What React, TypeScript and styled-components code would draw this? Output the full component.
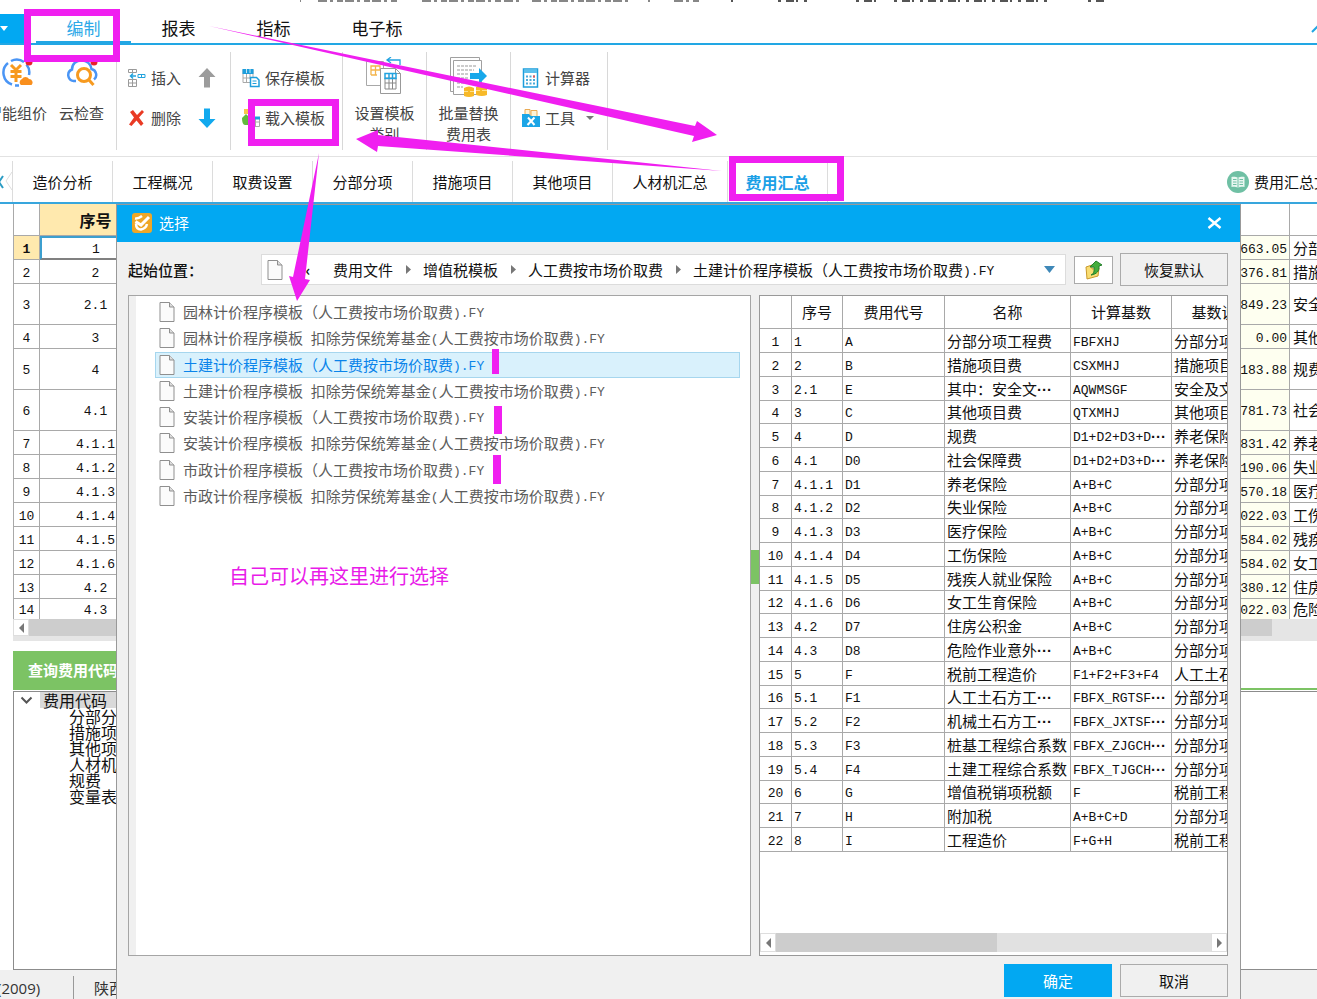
import React from "react";
import styled, { createGlobalStyle, css } from "styled-components";

const BLUE = "#02a8f2";
const MARK = "#f01ff0";
const GRID = "#a9a9a9";
const CJK = `"Noto Sans CJK SC", "Liberation Sans", sans-serif`;

const GlobalStyle = createGlobalStyle`
  *, *::before, *::after { box-sizing: border-box; }
  body { margin: 0; background: #fff; color: #111; font: 15px/20px ${CJK}; }
  button { font: inherit; color: inherit; background: none; border: 0; padding: 0; margin: 0; white-space: nowrap; cursor: pointer; }
  a { color: inherit; text-decoration: none; }
  ul { list-style: none; margin: 0; padding: 0; }
  svg { display: block; flex: none; }
`;

/* ---------- text with half-width latin ---------- */

const Latin = styled.span`
  font-family: "Liberation Mono", monospace;
  font-size: 13px;
  line-height: 1;
  vertical-align: 1px;
  white-space: pre;
`;

const Dots = styled.span`
  font-family: "Liberation Sans", sans-serif;
  font-weight: 700;
  line-height: 1;
`;

function Mixed({ text }: { text: string }) {
  return (
    <>
      {text
        .split(/([\x20-\x7e]+|·+)/)
        .filter(Boolean)
        .map((part, i) =>
          part[0] === "·" ? <Dots key={i}>{part}</Dots> : /^[\x20-\x7e]/.test(part) ? <Latin key={i}>{part}</Latin> : part
        )}
    </>
  );
}

/* ---------- application frame ---------- */

const Window = styled.div`
  position: relative;
  display: flex;
  flex-direction: column;
  height: 100vh;
  min-height: 900px;
  overflow: hidden;
`;

const TitleStrip = styled.div`
  height: 14px;
  flex: none;
  padding-left: 296px;
`;

const MenuBar = styled.nav`
  display: flex;
  flex: none;
  height: 31px;
  border-bottom: 2px solid #22a7e4;
`;

const FileMenu = styled.button`
  width: 24px;
  margin-right: 12px;
  background: ${BLUE};
`;

const MenuTab = styled.button<{ $active?: boolean; $wide?: boolean }>`
  width: ${(p) => (p.$wide ? 112 : 95)}px;
  font-size: 17px;
  line-height: 26px;
  border-bottom: 2px solid ${(p) => (p.$active ? "#22a7e4" : "transparent")};
  color: ${(p) => (p.$active ? "#2ea9e8" : "#111")};
`;

const Collapse = styled.button`
  margin-left: auto;
  width: 6px;
  overflow: hidden;
`;

const Ribbon = styled.div`
  display: flex;
  flex: none;
  height: 112px;
  padding: 7px 0 6px;
  border-bottom: 1px solid #e2e2e2;
  color: #444;
`;

const RibbonGroup = styled.div<{ $width: number }>`
  display: flex;
  flex: none;
  justify-content: center;
  width: ${(p) => p.$width}px;
  border-right: 1px solid #d8d8d8;
`;

const FirstGroup = styled(RibbonGroup)`
  justify-content: flex-start;
  overflow: hidden;
  gap: 12px;
  & > :first-child {
    margin-left: -13px;
  }
`;

const BigTool = styled.button`
  display: flex;
  flex-direction: column;
  align-items: center;
  height: 96px;
  padding-top: 5px;
  line-height: 21px;
`;

const BigToolIcon = styled.span`
  height: 45px;
`;

const BigToolLabel = styled.span`
  white-space: pre-line;
`;

const ToolRows = styled(RibbonGroup)`
  flex-direction: column;
  justify-content: flex-start;
  padding: 6px 0 0 11px;
`;

const ToolRow = styled.div<{ $gap?: number }>`
  display: flex;
  align-items: center;
  height: 40px;
  gap: ${(p) => p.$gap ?? 17}px;
`;

const SmallTool = styled.button`
  display: flex;
  align-items: center;
  gap: 5px;
`;

const TabBar = styled.nav`
  display: flex;
  flex: none;
  height: 47px;
  padding-top: 4px;
  border-bottom: 2px solid #38a6dd;
`;

const Scroller = styled.button`
  width: 13px;
  border-right: 1px solid #dcdcdc;
`;

const PageTab = styled.button<{ $active?: boolean; $wide?: boolean }>`
  width: ${(p) => (p.$wide ? 115 : 100)}px;
  border-right: 1px solid #dcdcdc;
  ${(p) =>
    p.$active &&
    css`
      color: #1ba0e6;
      font-size: 16px;
      font-weight: 700;
    `}
`;

const FileLink = styled.button`
  display: flex;
  align-items: center;
  gap: 5px;
  width: 90px;
  margin-left: auto;
  overflow: hidden;
`;

const Work = styled.main`
  flex: 1;
  min-height: 0;
  display: flex;
  flex-direction: column;
  margin-left: 13px;
`;

/* ---------- cost table behind the dialog ---------- */

const CostTable = styled.table`
  width: 100%;
  table-layout: fixed;
  border-collapse: separate;
  border-spacing: 0;
  border-left: 1px solid ${GRID};
  flex: none;
  th, td {
    padding: 0;
    height: 24px;
    font-weight: 400;
    line-height: 18px;
    white-space: nowrap;
    overflow: hidden;
    border-right: 1px solid ${GRID};
    border-bottom: 1px solid ${GRID};
    text-align: center;
  }
  th:last-child, td:last-child { border-right: 0; }
  thead th { height: 32px; }
  thead th:nth-child(2) {
    background: #ffe9ae;
    font-weight: 700;
    font-size: 16px;
  }
  td:nth-child(4) {
    background: #fefff0;
    text-align: right;
    padding-right: 2px;
  }
  td:nth-child(5) {
    text-align: left;
    padding-left: 3px;
  }
`;

const CostRow = styled.tr<{ $tall?: boolean; $last?: boolean; $current?: boolean }>`
  && > * {
    height: ${(p) => (p.$tall ? 41 : p.$last ? 20 : 24)}px;
    ${(p) => p.$last && "border-bottom: 0;"}
  }
  ${(p) =>
    p.$current &&
    css`
      && > th { background: #ffe9ae; font-weight: 700; }
      && > td:nth-child(2) { border: 2px solid #3c9fcf; border-bottom-color: #808080; }
    `}
`;

const CostScroll = styled.div`
  display: flex;
  flex: none;
  height: 22px;
  padding-bottom: 5px;
  background: #e5e5e5;
`;

const ScrollButton = styled.button`
  display: flex;
  align-items: center;
  justify-content: center;
  width: 16px;
  background: #fff;
  border: 1px solid #dedede;
`;

const CostThumb = styled.div`
  flex: 1;
  margin-right: 45px;
  background: #cdcdcd;
`;

const LookupBar = styled.div`
  flex: none;
  height: 39px;
  margin: 10px 0 1px;
  border-bottom: 2px solid #7cc364;
`;

const LookupTab = styled.button`
  height: 38px;
  width: 160px;
  padding-left: 15px;
  text-align: left;
  font-weight: 700;
  color: #fff;
  background: #7cc364;
`;

const Tree = styled.div`
  flex: 1;
  min-height: 0;
  border: 1px solid #8c8c8c;
  border-right: 0;
  font-size: 16px;
  line-height: 16px;
`;

const TreeRoot = styled.div`
  display: flex;
  align-items: center;
  height: 16px;
  padding-left: 6px;
  gap: 7px;
  span {
    width: 120px;
    padding-left: 3px;
    background: #d9d9d9;
  }
`;

const TreeLeaves = styled.ul`
  padding-left: 55px;
`;

const StatusBar = styled.footer`
  display: flex;
  flex: none;
  height: 29px;
  padding-top: 6px;
  background: #f0f0f0;
  color: #333;
  line-height: 24px;
  overflow: hidden;
`;

const StatusCell = styled.span<{ $first?: boolean }>`
  width: ${(p) => (p.$first ? 74 : 120)}px;
  padding-left: ${(p) => (p.$first ? 0 : 20)}px;
  font-family: ${(p) => (p.$first ? `"Open Sans", sans-serif` : "inherit")};
  border-right: 1px solid #999;
  text-indent: ${(p) => (p.$first ? -3 : 0)}px;
`;

/* ---------- dialog ---------- */

const Dialog = styled.section`
  position: absolute;
  top: 204px;
  bottom: 0;
  left: 116px;
  right: 76px;
  display: flex;
  flex-direction: column;
  background: #f0f0f0;
  border: 1px solid #999;
  border-bottom: 0;
`;

const DialogTitle = styled.header`
  display: flex;
  flex: none;
  align-items: center;
  gap: 7px;
  height: 37px;
  padding: 0 18px 2px 15px;
  color: #fff;
  background: ${BLUE};
  button { margin-left: auto; }
`;

const DialogBody = styled.div`
  display: flex;
  flex: 1;
  flex-direction: column;
  min-height: 0;
  padding: 11px 12px 2px 11px;
`;

const PathRow = styled.div`
  display: flex;
  flex: none;
  align-items: center;
  height: 33px;
  margin-bottom: 9px;
`;

const PathLabel = styled.span`
  width: 133px;
  font-weight: 500;
`;

const PathBox = styled.div`
  display: flex;
  flex: 1;
  align-items: center;
  height: 31px;
  padding: 0 10px 0 5px;
  white-space: nowrap;
  background: #fff;
  border: 1px solid #dcdcdc;
  button:last-child { margin-left: auto; }
`;

const BackMark = styled.button`
  width: 50px;
  text-align: center;
  font-weight: 700;
`;

const Crumb = styled.a`
  display: flex;
  align-items: center;
  span { white-space: nowrap; }
  svg { margin: 0 12px 0 13px; }
`;

const UpButton = styled.button`
  display: flex;
  align-items: center;
  justify-content: center;
  width: 39px;
  height: 28px;
  margin: 0 7px 0 8px;
  background: #fff;
  border: 1px solid #ababab;
`;

const PlainButton = styled.button<{ $primary?: boolean }>`
  width: 108px;
  height: 33px;
  border: 1px solid ${(p) => (p.$primary ? BLUE : "#ababab")};
  background: ${(p) => (p.$primary ? BLUE : "#f0f0f0")};
  color: ${(p) => (p.$primary ? "#fff" : "#111")};
`;

const Panes = styled.div`
  display: flex;
  flex: 1;
  min-height: 0;
`;

const FilePane = styled.div`
  flex: 1;
  min-width: 0;
  padding: 3px 10px 0 19px;
  background: #fff;
  border: 1px solid #a5a5a5;
  box-shadow: inset 7px 0 0 #f0f0f0;
`;

const FileList = styled.ul`
  display: flex;
  flex-direction: column;
  height: 210px;
`;

const FileItem = styled.li<{ $selected?: boolean }>`
  flex: 1;
  display: flex;
  align-items: center;
  padding-left: 4px;
  margin-left: 7px;
  color: #5c5c5c;
  ${(p) =>
    p.$selected &&
    css`
      color: #0a84ea;
      background: #d9f1fc;
      outline: 1px solid #a6d6ee;
      outline-offset: -1px;
    `}
  button { display: flex; align-items: center; gap: 8px; }
`;

const Splitter = styled.div`
  display: flex;
  align-items: center;
  width: 8px;
  padding-bottom: 118px;
  div {
    width: 8px;
    height: 34px;
    background: #7cc364;
  }
`;

const PreviewPane = styled.div`
  display: flex;
  flex: none;
  flex-direction: column;
  width: 469px;
  overflow: hidden;
  background: #fff;
  border: 1px solid #999;
`;

const TableClip = styled.div`
  flex: 1;
  min-height: 0;
  overflow: hidden;
`;

const PreviewTable = styled.table`
  width: 512px;
  table-layout: fixed;
  border-collapse: separate;
  border-spacing: 0;
  th, td {
    height: 24px;
    padding: 0 0 0 2px;
    font-weight: 400;
    line-height: 18px;
    text-align: left;
    white-space: nowrap;
    overflow: hidden;
    border-right: 1px solid ${GRID};
    border-bottom: 1px solid ${GRID};
  }
  thead th { height: 33px; padding: 0; text-align: center; }
  tbody th { text-align: center; padding: 0; }
  tbody tr:nth-child(4n) > * { height: 23px; }
`;

const PreviewScroll = styled.div`
  display: flex;
  flex: none;
  height: 19px;
  margin-bottom: 3px;
  background: #e1e1e1;
  & > :last-child { margin-left: auto; }
`;

const PreviewThumb = styled.div`
  width: 221px;
  background: #cdcdcd;
`;

const DialogFooter = styled.footer`
  display: flex;
  flex: none;
  justify-content: flex-end;
  gap: 8px;
  padding-top: 8px;
`;

/* ---------- annotations drawn over the window ---------- */

const Marks = styled.svg`
  position: absolute;
  top: 0;
  left: 0;
  pointer-events: none;
`;

const Note = styled.p`
  position: absolute;
  top: 562px;
  left: 229px;
  margin: 0;
  font-size: 20px;
  line-height: 28px;
  color: #e81be8;
`;

/* ---------- icons ---------- */

const PageIcon = ({ width = 16, height = 20 }: { width?: number; height?: number }) => (
  <svg width={width} height={height} viewBox="0 0 16 20">
    <path d="M1 .5h9.5l4.5 4.5v14.500H1z" fill="#fbfbfb" stroke="#8f8f8f" />
    <path d="M10.500 .5v4.500H15" fill="#ddd" stroke="#8f8f8f" />
  </svg>
);

const Triangle = ({ dir, color = "#777", w = 6, h = 10 }: { dir: "left" | "right" | "down"; color?: string; w?: number; h?: number }) => (
  <svg width={w} height={h}>
    <polygon
      fill={color}
      points={dir === "left" ? `${w},0 0,${h / 2} ${w},${h}` : dir === "right" ? `0,0 ${w},${h / 2} 0,${h}` : `0,0 ${w},0 ${w / 2},${h}`}
    />
  </svg>
);

const PriceIcon = () => (
  <svg width="32" height="32" viewBox="0 0 32 32" fill="none">
    <path d="M11 27.500A12.500 12.500 0 0 1 7 6M10 4a12.500 12.500 0 0 1 13 1M25.500 7.500A12.500 12.500 0 0 1 28 18M14 28.500h4" stroke="#4a95f5" strokeWidth="2.500" />
    <path d="M10 8l5 5 5-5M15 13v12M9.500 14.500h11M9.500 19.500h11" stroke="#f79a1f" strokeWidth="3" />
    <path d="M20 28a3.500 3.500 0 0 1 1-6 4 4 0 0 1 7 0 3.500 3.500 0 0 1 2.500 6z" fill="#f98f1d" />
    <circle cx="28" cy="5" r="3.500" fill="#e8202c" />
  </svg>
);

const CloudIcon = () => (
  <svg width="32" height="32" viewBox="0 0 32 32" fill="none">
    <path d="M10 24H7.500A6 6 0 0 1 6 12.500C6 7 10 3.500 15.500 3.500S25 7 25.500 12A6 6 0 0 1 28 22.500" stroke="#4a95f5" strokeWidth="2.500" />
    <circle cx="18" cy="18" r="6.500" fill="#fff" stroke="#f79a1f" strokeWidth="3" />
    <path d="M22.500 22.500l5 5.500" stroke="#f79a1f" strokeWidth="3" />
    <circle cx="28" cy="5" r="3.500" fill="#e8202c" />
  </svg>
);

const InsertIcon = () => (
  <svg width="18" height="20" viewBox="0 0 18 20" fill="none">
    <path d="M.5 1.500h8v3h-8zM4.500 1.500v3M.5 11.500h8v7h-8zM4.500 11.500v7M.5 15h8" stroke="#9a9a9a" />
    <path d="M10 6.500h7v3h-7zM13.500 6.500v3" stroke="#23a3dd" />
    <path d="M2 8h6M5 5.500L2.500 8 5 10.500" stroke="#23a3dd" strokeWidth="1.500" />
  </svg>
);

const DeleteIcon = () => (
  <svg width="18" height="18" viewBox="0 0 18 18">
    <path d="M2 3l3-2 4 5 5-5 2 2-5 5.500 4.500 6L13 17l-4.500-5.500L3.500 17 1 15.500l5-7z" fill="#e93a24" />
  </svg>
);

const BlockArrow = ({ up }: { up?: boolean }) => (
  <svg width="18" height="20" viewBox="0 0 18 20">
    <path d={up ? "M9 0l8.500 9H12v10.500H6V9H.5z" : "M9 20l8.500-9H12V.5H6V11H.5z"} fill={up ? "#9c9c9c" : "#12a9ee"} />
  </svg>
);

const SaveTplIcon = () => (
  <svg width="18" height="20" viewBox="0 0 18 20" fill="none">
    <path d="M1 1.500h10v13H1z" fill="#fff" stroke="#a9a9a9" />
    <path d="M.5 1h11v5H.5z" fill="#1d9edc" />
    <path d="M4.500 1v4M8 1v4" stroke="#bfe6f7" />
    <path d="M1 10h9M4.500 6v8.500M8 6v5" stroke="#a9a9a9" />
    <path d="M8.500 9.500h6l2.500 2.500v6.500H8.500z" fill="#fff" stroke="#1d9edc" strokeWidth="1.500" />
    <path d="M10.500 13h4M10.500 15.500h4" stroke="#1d9edc" />
  </svg>
);

const LoadTplIcon = () => (
  <svg width="18" height="20" viewBox="0 0 18 20" fill="none">
    <path d="M2 1h7v5H2z" fill="#f7c54a" />
    <path d="M0 10l4-4 5 5v6H3c-2 0-3-3-3-7z" fill="#62b93e" />
    <path d="M9.500 9.500h8v9h-8zM9.500 14h8M13.500 11v7" fill="#fff" stroke="#a9a9a9" />
    <path d="M9 8.500h9v3H9z" fill="#1d9edc" />
  </svg>
);

const SetTplIcon = () => (
  <svg width="38" height="40" viewBox="0 0 38 40" fill="none">
    <path d="M1.500 4.500h17v24h-17z" fill="#fff" stroke="#a8a8a8" />
    <path d="M6 9h9v4H6zM6 9v9M10.500 9v9M15 9v4M6 18h6" stroke="#f3b54d" strokeWidth="1.300" />
    <path d="M15.500 11.500h15l5 5v20h-20z" fill="#fff" stroke="#999" />
    <path d="M30.500 11.500v5h5" stroke="#999" />
    <path d="M20 21h11v11H20zM20 26h11M24 21v11M27.500 21v11" stroke="#888" />
    <path d="M20 16.500h11v5H20zM24 16.500v5M27.500 16.500v5" stroke="#22a3e0" strokeWidth="1.500" />
    <path d="M22 3h13v5M26 0l-4 3 4 3" stroke="#22a3e0" strokeWidth="1.300" />
  </svg>
);

const BatchIcon = () => (
  <svg width="38" height="40" viewBox="0 0 38 40" fill="none">
    <path d="M1.500 .5h29v34h-29z" fill="#fff" stroke="#a0a0a0" />
    <path d="M4.500 3.500h28v34h-28z" fill="#fff" stroke="#a0a0a0" />
    <path d="M8 9h20M8 13h17M8 17h12M8 21h12M8 26h12M8 30h6" stroke="#999" strokeDasharray="3 1" />
    <path d="M21 16h9v-5l8 8-8 8v-5h-9z" fill="#18a8ea" />
    <path d="M15 31q5-3 10 0v8q-5 2-10 0zM27 30q5-3 11 0v8q-5 2-11 0z" fill="#f7b928" />
    <path d="M15 34.500h4M21 34.500h4M27 33.500h4M33 33.500h5" stroke="#ffe08a" />
  </svg>
);

const CalcIcon = () => (
  <svg width="18" height="20" viewBox="0 0 18 20" fill="none">
    <path d="M1.500 1h14v18h-14z" fill="#fff" stroke="#1d9edc" strokeWidth="1.500" />
    <path d="M2 1.500h13V5H2z" fill="#5bc0ec" />
    <path d="M4 8.500h10M4 12h10M4 15.500h10" stroke="#4ba9d8" strokeWidth="2" strokeDasharray="2 1.500" />
    <path d="M11 7.500h2v2h-2z" fill="#e55" />
  </svg>
);

const ToolboxIcon = () => (
  <svg width="18" height="20" viewBox="0 0 18 20" fill="none">
    <path d="M3 1.500h5v6H3zM9 2.500h6v6H9z" fill="#fff3d6" stroke="#e9ab56" />
    <path d="M0 6h7l2 2h9v11H0z" fill="#1ba5e6" />
    <path d="M6 9.500l6.500 7.500M12.500 9.500L5.500 17" stroke="#fff" strokeWidth="2" />
  </svg>
);

const BookIcon = () => (
  <svg width="22" height="22" viewBox="0 0 22 22" fill="none">
    <circle cx="11" cy="11" r="11" fill="#6fc0a4" />
    <path d="M11 7c-2-1.300-4-1.300-6.500-1v10c2.500-.3 4.500-.3 6.500 1 2-1.300 4-1.300 6.500-1V6C15 5.700 13 5.700 11 7z" fill="#e9f7f1" />
    <path d="M11 7v10M6 8.500h3.500M6 11h3.500M6 13.500h3.500M12.500 8.500H16M12.500 11H16M12.500 13.500H16" stroke="#6fc0a4" />
  </svg>
);

const AppIcon = () => (
  <svg width="20" height="20" viewBox="0 0 20 20" fill="none">
    <rect width="20" height="20" rx="3" fill="#eea727" />
    <path d="M3 5.500q3 .5 7-2.500" stroke="#fff" strokeWidth="2.500" />
    <path d="M3.500 8.500l5.500 3.500L17 4" stroke="#fff" strokeWidth="3" />
    <path d="M4 10.500q0 6 5 6 5-1 6-5.500" stroke="#fff" strokeWidth="2.500" />
  </svg>
);

const FolderUpIcon = () => (
  <svg width="20" height="20" viewBox="0 0 20 20">
    <path d="M2 7l6-2v4l7-1-1 8-11 3z" fill="#f9dd72" stroke="#c99a2b" />
    <path d="M7 15c3-1 3.500-4 3-8H6l6-6 6 4-3 1c.5 5-2 8-8 9z" fill="#44ad3c" stroke="#23802a" />
  </svg>
);

/* ---------- data ---------- */

const costRows: [string, string, string, boolean?][] = [
  ["1", "663.05", "分部分项工程费"],
  ["2", "376.81", "措施项目费"],
  ["2.1", "849.23", "安全及文明施工", true],
  ["3", "0.00", "其他项目费"],
  ["4", "183.88", "规费", true],
  ["4.1", "781.73", "社会保障费", true],
  ["4.1.1", "831.42", "养老保险"],
  ["4.1.2", "190.06", "失业保险"],
  ["4.1.3", "570.18", "医疗保险"],
  ["4.1.4", "022.03", "工伤保险"],
  ["4.1.5", "584.02", "残疾人就业保险"],
  ["4.1.6", "584.02", "女工生育保险"],
  ["4.2", "380.12", "住房公积金"],
  ["4.3", "022.03", "危险作业意外伤害"],
];

const kinds = ["园林", "土建", "安装", "市政"];
const files = kinds.flatMap((k) => [
  `${k}计价程序模板（人工费按市场价取费).FY`,
  `${k}计价程序模板 扣除劳保统筹基金(人工费按市场价取费).FY`,
]);

const previewRows = [
  ["1", "A", "分部分项工程费", "FBFXHJ", "分部分项"],
  ["2", "B", "措施项目费", "CSXMHJ", "措施项目"],
  ["2.1", "E", "其中：安全文···", "AQWMSGF", "安全及文"],
  ["3", "C", "其他项目费", "QTXMHJ", "其他项目"],
  ["4", "D", "规费", "D1+D2+D3+D···", "养老保险"],
  ["4.1", "D0", "社会保障费", "D1+D2+D3+D···", "养老保险"],
  ["4.1.1", "D1", "养老保险", "A+B+C", "分部分项"],
  ["4.1.2", "D2", "失业保险", "A+B+C", "分部分项"],
  ["4.1.3", "D3", "医疗保险", "A+B+C", "分部分项"],
  ["4.1.4", "D4", "工伤保险", "A+B+C", "分部分项"],
  ["4.1.5", "D5", "残疾人就业保险", "A+B+C", "分部分项"],
  ["4.1.6", "D6", "女工生育保险", "A+B+C", "分部分项"],
  ["4.2", "D7", "住房公积金", "A+B+C", "分部分项"],
  ["4.3", "D8", "危险作业意外···", "A+B+C", "分部分项"],
  ["5", "F", "税前工程造价", "F1+F2+F3+F4", "人工土石"],
  ["5.1", "F1", "人工土石方工···", "FBFX_RGTSF···", "分部分项"],
  ["5.2", "F2", "机械土石方工···", "FBFX_JXTSF···", "分部分项"],
  ["5.3", "F3", "桩基工程综合系数", "FBFX_ZJGCH···", "分部分项"],
  ["5.4", "F4", "土建工程综合系数", "FBFX_TJGCH···", "分部分项"],
  ["6", "G", "增值税销项税额", "F", "税前工程"],
  ["7", "H", "附加税", "A+B+C+D", "分部分项"],
  ["8", "I", "工程造价", "F+G+H", "税前工程"],
];

const pageTabs = ["造价分析", "工程概况", "取费设置", "分部分项", "措施项目", "其他项目", "人材机汇总", "费用汇总"];

/* ---------- sections ---------- */

function BigButton({ icon, label }: { icon: React.ReactNode; label: string }) {
  return (
    <BigTool>
      <BigToolIcon>{icon}</BigToolIcon>
      <BigToolLabel>{label}</BigToolLabel>
    </BigTool>
  );
}

function Header() {
  return (
    <>
      <TitleStrip>
        <svg width="810" height="3" stroke="#555" strokeWidth="2">
          <path d="M4 1h1M22 1h80M126 1h80M208 1h18M236 1h100M352 1h2M378 1h26" strokeDasharray="9 3 3 4 6 2" opacity=".7" />
          <path d="M435 1h2M482 1h30M560 1h26M598 1h44M644 1h50M696 1h60M792 1h16" strokeDasharray="3 5 8 2 2 6" />
        </svg>
      </TitleStrip>
      <MenuBar>
        <FileMenu aria-label="文件">
          <Triangle dir="down" color="#fff" w={8} h={5} />
        </FileMenu>
        <MenuTab $active>编制</MenuTab>
        <MenuTab>报表</MenuTab>
        <MenuTab>指标</MenuTab>
        <MenuTab $wide>电子标</MenuTab>
        <Collapse aria-label="收起">
          <svg width="12" height="8" fill="none">
            <path d="M1 7l5-5 5 5" stroke="#22a7e4" strokeWidth="2" />
          </svg>
        </Collapse>
      </MenuBar>
      <Ribbon>
        <FirstGroup $width={117}>
          <BigButton icon={<PriceIcon />} label="智能组价" />
          <BigButton icon={<CloudIcon />} label="云检查" />
        </FirstGroup>
        <ToolRows $width={114}>
          <ToolRow>
            <SmallTool><InsertIcon />插入</SmallTool>
            <SmallTool aria-label="上移"><BlockArrow up /></SmallTool>
          </ToolRow>
          <ToolRow>
            <SmallTool><DeleteIcon />删除</SmallTool>
            <SmallTool aria-label="下移"><BlockArrow /></SmallTool>
          </ToolRow>
        </ToolRows>
        <ToolRows $width={112}>
          <ToolRow><SmallTool><SaveTplIcon />保存模板</SmallTool></ToolRow>
          <ToolRow><SmallTool><LoadTplIcon />载入模板</SmallTool></ToolRow>
        </ToolRows>
        <RibbonGroup $width={84}>
          <BigButton icon={<SetTplIcon />} label={"设置模板\n类别"} />
        </RibbonGroup>
        <RibbonGroup $width={84}>
          <BigButton icon={<BatchIcon />} label={"批量替换\n费用表"} />
        </RibbonGroup>
        <ToolRows $width={97}>
          <ToolRow><SmallTool><CalcIcon />计算器</SmallTool></ToolRow>
          <ToolRow $gap={11}>
            <SmallTool><ToolboxIcon />工具</SmallTool>
            <Triangle dir="down" w={8} h={4} />
          </ToolRow>
        </ToolRows>
      </Ribbon>
      <TabBar>
        <Scroller aria-label="向左">
          <svg width="12" height="20" fill="none">
            <path d="M3 4l-4 6 4 6" stroke="#2b9cc4" strokeWidth="2" />
            <path d="M12 0L6 9l6 9" stroke="#ddd" />
          </svg>
        </Scroller>
        {pageTabs.map((t) => (
          <PageTab key={t} $active={t === "费用汇总"} $wide={t.length === 5}>{t}</PageTab>
        ))}
        <FileLink><BookIcon />费用汇总文件</FileLink>
      </TabBar>
    </>
  );
}

function Workspace() {
  return (
    <Work>
      <CostTable>
        <colgroup>
          <col style={{ width: 26 }} />
          <col style={{ width: 112 }} />
          <col />
          <col style={{ width: 60 }} />
          <col style={{ width: 27 }} />
        </colgroup>
        <thead>
          <tr><th /><th>序号</th><th /><th /><th /></tr>
        </thead>
        <tbody>
          {costRows.map(([no, amount, note, tall], i) => (
            <CostRow key={no} $tall={tall} $current={i === 0} $last={i === costRows.length - 1}>
              <th scope="row"><Latin>{i + 1}</Latin></th>
              <td><Latin>{no}</Latin></td>
              <td />
              <td><Latin>{amount}</Latin></td>
              <td>{note}</td>
            </CostRow>
          ))}
        </tbody>
      </CostTable>
      <CostScroll>
        <ScrollButton aria-label="向左滚动"><Triangle dir="left" w={5} /></ScrollButton>
        <CostThumb />
      </CostScroll>
      <LookupBar><LookupTab>查询费用代码</LookupTab></LookupBar>
      <Tree>
        <TreeRoot>
          <svg width="13" height="9" fill="none"><path d="M1.500 1.500l5 5 5-5" stroke="#555" strokeWidth="2" /></svg>
          <span>费用代码</span>
        </TreeRoot>
        <TreeLeaves>
          {["分部分项", "措施项目", "其他项目", "人材机", "规费", "变量表"].map((t) => <li key={t}>{t}</li>)}
        </TreeLeaves>
      </Tree>
    </Work>
  );
}

function Preview() {
  return (
    <PreviewPane>
      <TableClip>
        <PreviewTable>
          <colgroup>
            {[32, 51, 102, 126, 101, 100].map((w, i) => <col key={i} style={{ width: w }} />)}
          </colgroup>
          <thead>
            <tr><th /><th>序号</th><th>费用代号</th><th>名称</th><th>计算基数</th><th>基数说明</th></tr>
          </thead>
          <tbody>
            {previewRows.map((row, i) => (
              <tr key={i}>
                <th scope="row"><Latin>{i + 1}</Latin></th>
                {row.map((cell, j) => <td key={j}><Mixed text={cell} /></td>)}
              </tr>
            ))}
          </tbody>
        </PreviewTable>
      </TableClip>
      <PreviewScroll>
        <ScrollButton aria-label="向左滚动"><Triangle dir="left" w={5} /></ScrollButton>
        <PreviewThumb />
        <ScrollButton aria-label="向右滚动"><Triangle dir="right" w={5} /></ScrollButton>
      </PreviewScroll>
    </PreviewPane>
  );
}

function ChooseDialog() {
  return (
    <Dialog role="dialog" aria-label="选择">
      <DialogTitle>
        <AppIcon />
        选择
        <button aria-label="关闭">
          <svg width="15" height="12" fill="none"><path d="M1.500 1l12 10M13.500 1l-12 10" stroke="#fff" strokeWidth="2.500" /></svg>
        </button>
      </DialogTitle>
      <DialogBody>
        <PathRow>
          <PathLabel>起始位置：</PathLabel>
          <PathBox>
            <PageIcon />
            <BackMark>‹</BackMark>
            {["费用文件", "增值税模板", "人工费按市场价取费"].map((t) => (
              <Crumb key={t} href="#"><span>{t}</span><Triangle dir="right" w={5} h={9} /></Crumb>
            ))}
            <Crumb href="#"><span><Mixed text="土建计价程序模板（人工费按市场价取费).FY" /></span></Crumb>
            <button aria-label="展开"><Triangle dir="down" color="#3f88b8" w={11} h={7} /></button>
          </PathBox>
          <UpButton aria-label="上一级"><FolderUpIcon /></UpButton>
          <PlainButton>恢复默认</PlainButton>
        </PathRow>
        <Panes>
          <FilePane>
            <FileList>
              {files.map((f, i) => (
                <FileItem key={f} $selected={i === 2}>
                  <button><PageIcon /><span><Mixed text={f} /></span></button>
                </FileItem>
              ))}
            </FileList>
          </FilePane>
          <Splitter><div /></Splitter>
          <Preview />
        </Panes>
        <DialogFooter>
          <PlainButton $primary>确定</PlainButton>
          <PlainButton>取消</PlainButton>
        </DialogFooter>
      </DialogBody>
    </Dialog>
  );
}

function Annotations() {
  return (
    <>
      <Marks width="860" height="500" fill={MARK}>
        <g fill="none" stroke={MARK} strokeWidth="7">
          <rect x="27.500" y="12.500" width="89" height="46" />
          <rect x="251.500" y="102.500" width="84" height="40" />
          <rect x="732.500" y="159.500" width="108" height="38" />
        </g>
        <polygon points="209,26 695,126 697,121 717,135 692,142 694,136" />
        <polygon points="722,171 378,135 378,130 356,139 377,152 378,146" />
        <polygon points="319,153 293,277 289,276 297,301 310,280 305,279" />
        <rect x="492" y="349" width="7" height="25" />
        <rect x="494" y="406" width="8" height="28" />
        <rect x="493" y="455" width="8" height="29" />
      </Marks>
      <Note>自己可以再这里进行选择</Note>
    </>
  );
}

export default function App() {
  return (
    <>
      <GlobalStyle />
      <Window lang="zh-CN">
        <Header />
        <Workspace />
        <StatusBar>
          <StatusCell $first>(2009)</StatusCell>
          <StatusCell>陕西</StatusCell>
        </StatusBar>
        <ChooseDialog />
        <Annotations />
      </Window>
    </>
  );
}
